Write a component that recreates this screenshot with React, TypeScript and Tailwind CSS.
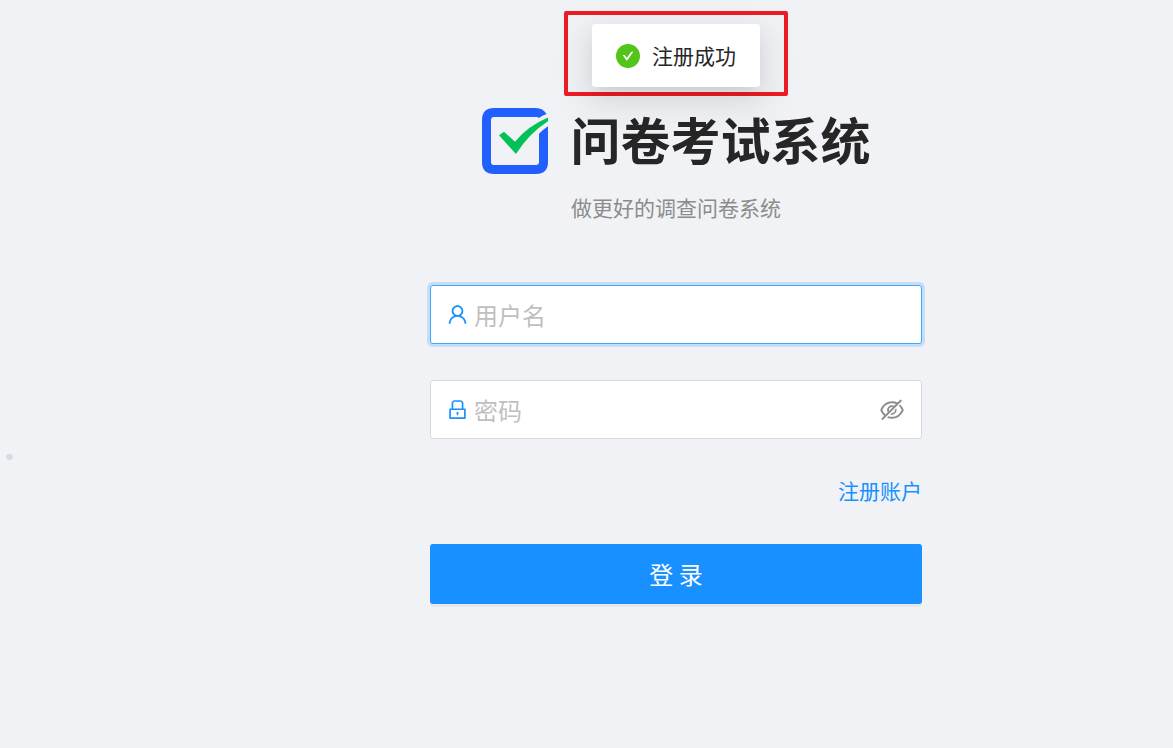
import { useState } from "react";
import type { ReactNode } from "react";
import {
  AiFillCheckCircle,
  AiOutlineEye,
  AiOutlineEyeInvisible,
  AiOutlineLock,
  AiOutlineUser,
} from "react-icons/ai";

// Ant Design crops its glyphs to this box, without the outer margin
const ICON_BOX = "64 64 896 896";

interface FieldProps {
  id: string;
  label: string;
  type: string;
  icon: ReactNode;
  active?: boolean;
  suffix?: ReactNode;
}

function Logo() {
  return (
    <svg className="w-[66px] h-[66px] shrink-0" viewBox="0 0 66 66" aria-hidden="true">
      <path
        fill="#2160ff"
        fillRule="evenodd"
        d="M12 0H54Q61 0 64.5 6Q60.5 7.6 56.6 10.2Q56.3 9 55 9H12Q9 9 9 12V54Q9 57 12 57H54Q57 57 57 54V25.7Q61 21.5 66 18.2V54Q66 66 54 66H12Q0 66 0 54V12Q0 0 12 0Z"
      />
      <path
        fill="#04c058"
        d="M17 27.3L22 23.7L33 33.7Q46 18 66 9.6V13.3Q47 25.5 34 46Z"
      />
    </svg>
  );
}

function Toast({ message }: { message: string }) {
  return (
    <div
      role="status"
      className="flex items-center gap-3 px-6 h-[63px] bg-white rounded-[3px] shadow-[0_4px_9px_-6px_rgba(0,0,0,0.12),0_9px_24px_rgba(0,0,0,0.08),0_14px_42px_12px_rgba(0,0,0,0.05)]"
    >
      <AiFillCheckCircle viewBox={ICON_BOX} className="w-6 h-6 shrink-0 text-[#52c41a]" />
      <span className="text-[21px] leading-[33px] text-[#262626]">{message}</span>
    </div>
  );
}

function Field({ id, label, type, icon, active, suffix }: FieldProps) {
  return (
    <div
      className={`flex items-center h-[59px] pl-4 pr-[17px] bg-white border rounded-[3px] ${
        active
          ? "border-[#40a9ff] shadow-[0_0_0_3px_rgba(24,144,255,0.2)]"
          : "border-[#d9d9d9]"
      }`}
    >
      <label htmlFor={id} aria-label={label} className="mr-1.5 text-[#1890ff]">
        {icon}
      </label>
      <input
        id={id}
        type={type}
        placeholder={label}
        className="flex-1 min-w-0 h-9 text-2xl leading-9 text-[#262626] placeholder:text-[#bfbfbf] bg-transparent outline-none"
      />
      {suffix}
    </div>
  );
}

export default function App() {
  const [visible, setVisible] = useState(false);

  return (
    <div className="relative min-h-screen bg-[#f0f2f5] overflow-hidden font-['Noto_Sans_CJK_SC',sans-serif]">
      {/* background dot */}
      <span className="absolute left-[6px] top-[454px] w-[7px] h-[6px] rounded-full bg-[#d3dce8]" />

      {/* message overlay */}
      <div className="absolute inset-x-0 top-[11px] pl-[179px] flex justify-center">
        <div className="px-6 pt-[9px] pb-[5px] border-4 border-[#ed1c24] rounded-[2px]">
          <Toast message="注册成功" />
        </div>
      </div>

      <main className="pl-[179px] pt-[108px]">
        <header className="flex flex-col items-center">
          <div className="flex items-start gap-[23px]">
            <Logo />
            <h1 className="text-[50px] leading-[60px] font-bold text-[#262626]">问卷考试系统</h1>
          </div>
          <p className="mt-[17px] text-[21px] leading-[33px] text-[#8c8c8c]">做更好的调查问卷系统</p>
        </header>

        <form
          className="mt-[61px] mx-auto w-full max-w-[492px] flex flex-col"
          onSubmit={(e) => e.preventDefault()}
        >
          <div className="flex flex-col gap-9">
            <Field
              id="username"
              label="用户名"
              type="text"
              active
              icon={<AiOutlineUser viewBox={ICON_BOX} className="w-[21px] h-[21px]" />}
            />
            <Field
              id="password"
              label="密码"
              type={visible ? "text" : "password"}
              icon={<AiOutlineLock viewBox={ICON_BOX} className="w-[21px] h-[21px]" />}
              suffix={
                <button
                  type="button"
                  aria-label="显示密码"
                  onClick={() => setVisible(!visible)}
                  className="text-[#8c8c8c]"
                >
                  {visible ? (
                    <AiOutlineEye viewBox={ICON_BOX} className="w-6 h-6" />
                  ) : (
                    <AiOutlineEyeInvisible viewBox={ICON_BOX} className="w-6 h-6" />
                  )}
                </button>
              }
            />
          </div>
          <a href="#register" className="self-end mt-[35px] text-[21px] leading-[33px] text-[#1890ff]">
            注册账户
          </a>
          <button
            type="submit"
            className="mt-[37px] h-[60px] rounded-[3px] bg-[#1890ff] text-2xl text-white shadow-[0_3px_0_rgba(0,0,0,0.045)]"
          >
            登 录
          </button>
        </form>
      </main>
    </div>
  );
}
